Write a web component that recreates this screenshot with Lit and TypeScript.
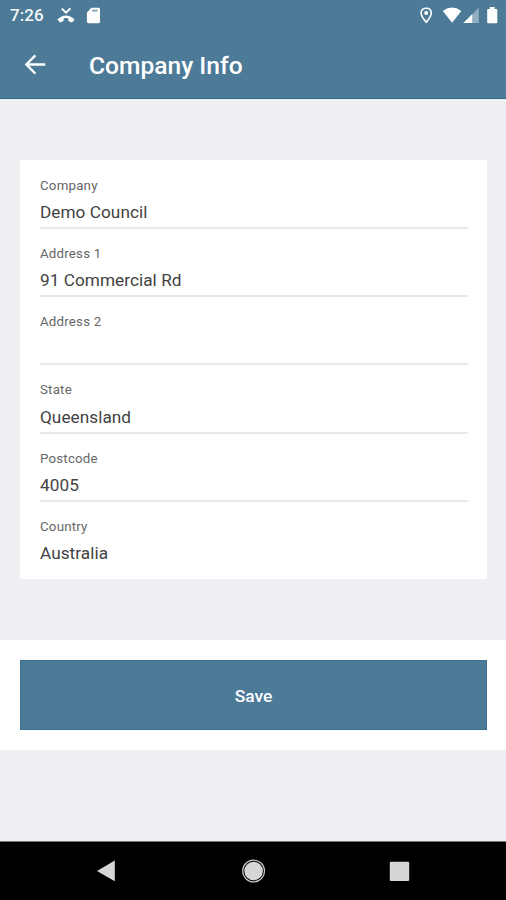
import { LitElement, html, css, svg } from "lit";
import { customElement, property } from "lit/decorators.js";

@customElement("info-field")
class InfoField extends LitElement {
  @property() label = "";
  @property() value = "";

  static styles = css`
    :host {
      display: block;
      box-sizing: border-box;
      height: 68.15px;
      padding-top: 17px;
      border-bottom: 2px solid #e9e9eb;
    }
    :host(:last-of-type) {
      border-bottom-color: transparent;
    }
    .label {
      height: 16px;
      line-height: 16px;
      font-size: 13.3px;
      letter-spacing: 0.2px;
      color: #666;
    }
    .value {
      margin-top: 7.3px;
      height: 22px;
      line-height: 22px;
      font-size: 17.2px;
      letter-spacing: 0.05px;
      color: #424242;
    }
  `;

  render() {
    return html`
      <div class="label">${this.label}</div>
      <div class="value">${this.value}</div>
    `;
  }
}

@customElement("app-root")
class AppRoot extends LitElement {
  private fields = [
    ["Company", "Demo Council"],
    ["Address 1", "91 Commercial Rd"],
    ["Address 2", ""],
    ["State", "Queensland"],
    ["Postcode", "4005"],
    ["Country", "Australia"],
  ];

  static styles = css`
    :host {
      display: flex;
      flex-direction: column;
      height: 900px;
      overflow: hidden;
      background: #efeef3;
      font-family: Roboto, "Liberation Sans", sans-serif;
    }
    svg {
      display: block;
      flex: none;
    }
    .top {
      flex: none;
      box-sizing: border-box;
      height: 99px;
      background: #4d7a97;
      border-bottom: 1px solid #2f6886;
      color: #fff;
    }
    .status {
      display: flex;
      align-items: center;
      height: 31px;
      padding-left: 10px;
    }
    .time {
      width: 47px;
      font-size: 17px;
      font-weight: 500;
      line-height: 31px;
      letter-spacing: 0.1px;
      color: #f2f7fa;
    }
    .right {
      margin-left: auto;
    }
    .bar {
      display: flex;
      align-items: center;
      height: 67px;
      padding-left: 20px;
    }
    h1 {
      margin: 2px 0 0 39px;
      font-size: 24.6px;
      font-weight: 500;
      line-height: 67px;
    }
    .card {
      flex: none;
      box-sizing: border-box;
      height: 419px;
      margin: 61px 19px 0 20px;
      padding: 1px 19px 0 20px;
      background: #fff;
    }
    .footer {
      flex: none;
      box-sizing: border-box;
      height: 110px;
      margin-top: 61px;
      padding: 20px 19px 20px 20px;
      background: #fff;
    }
    button {
      display: block;
      box-sizing: border-box;
      width: 100%;
      height: 70px;
      padding: 2px 0 0;
      border: 1px solid #3d7190;
      background: #4d7a97;
      color: #fff;
      font: 500 17.4px Roboto, "Liberation Sans", sans-serif;
    }
    .nav {
      flex: none;
      margin-top: auto;
      height: 58px;
      background: #000;
      border-top: 1px solid #77777a;
    }
  `;

  render() {
    return html`
      <header class="top">
        <div class="status">
          <span class="time">7:26</span>
          <svg width="45" height="31" viewBox="57 0 45 31">
            ${svg`
              <path d="M61.8 8.6 L66 12.7 L70.4 8.4" fill="none" stroke="#fff" stroke-width="2" />
              <path d="M57.4 19.6 Q66 11.6 74.6 19.6 L72 22.6 L68.4 20.9 V18.4 Q66 17.8 63.6 18.4 V20.9 L60 22.6 Z" fill="#fff" />
              <path d="M91.4 7.8 H98.6 Q100 7.8 100 9.2 V21.8 Q100 23.2 98.6 23.2 H88.3 Q86.9 23.2 86.9 21.8 V12.4 Z" fill="#fff" />
              <path d="M92 10.6 H97.6" stroke="#8ba8bb" stroke-width="2" />
            `}
          </svg>
          <svg class="right" width="86" height="31" viewBox="420 0 86 31">
            ${svg`
              <path d="M426.2 8.2 C423 8.2 421.1 10.3 421.1 13.1 C421.1 16.5 426.2 22.3 426.2 22.3 C426.2 22.3 431.3 16.5 431.3 13.1 C431.3 10.3 429.4 8.2 426.2 8.2 Z" fill="none" stroke="#fff" stroke-width="1.6" />
              <circle cx="426.2" cy="13.1" r="2" fill="#fff" />
              <path d="M442.8 10.9 Q452 4.3 461.4 10.9 L452.1 22.8 Z" fill="#fff" />
              <path d="M463.4 23 L478.8 7.8 V23 Z" fill="#94afc1" />
              <path d="M463.4 23 L472.2 14.3 V23 Z" fill="#fff" />
              <path d="M489.8 7 H494.6 V8.9 H496.3 Q497.3 8.9 497.3 9.9 V22.2 Q497.3 23.2 496.3 23.2 H488.2 Q487.2 23.2 487.2 22.2 V9.9 Q487.2 8.9 488.2 8.9 H489.8 Z" fill="#fff" />
            `}
          </svg>
        </div>
        <div class="bar">
          <svg width="30" height="30" viewBox="20 50 30 30">
            ${svg`<path d="M45.2 64.5 H27 M35.4 55.4 L26.3 64.5 L35.4 73.6" fill="none" stroke="#fff" stroke-width="2.3" />`}
          </svg>
          <h1>Company Info</h1>
        </div>
      </header>
      <main class="card">
        ${this.fields.map(([label, value]) => html`<info-field .label=${label} .value=${value}></info-field>`)}
      </main>
      <section class="footer"><button>Save</button></section>
      <nav class="nav">
        <svg width="506" height="57" viewBox="0 842 506 57">
          ${svg`
            <path d="M97 871 L114.8 860.6 V881.3 Z" fill="#d6d6d6" />
            <circle cx="253.6" cy="871" r="10.9" fill="none" stroke="#c4c4c4" stroke-width="1.2" />
            <circle cx="253.6" cy="871" r="9.3" fill="#d6d6d6" />
            <rect x="389.8" y="861.7" width="19.4" height="19.2" rx="1.2" fill="#d6d6d6" />
          `}
        </svg>
      </nav>
    `;
  }
}
